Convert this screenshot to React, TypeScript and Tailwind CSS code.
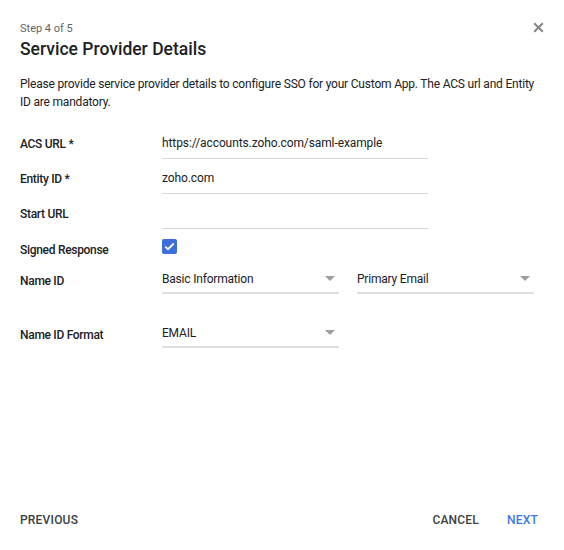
import React from 'react'

function Caret() {
  return (
    <svg width="10" height="5" viewBox="0 0 10 5" className="shrink-0">
      <path d="M0 0 L10 0 L5 5 Z" fill="#9e9e9e" />
    </svg>
  )
}

function TextField({ value }: { value: string }) {
  return (
    <div className="w-[266px] h-[31px] border-b border-[#d5d5d5] flex items-center text-[12px] font-normal tracking-[-0.1px] text-[#202124]">
      {value}
    </div>
  )
}

function Select({ value, width }: { value: string; width: string }) {
  return (
    <div className={`${width} h-[31px] border-b-2 border-[#dedede] flex items-center justify-between pt-[3px] pr-[4px] text-[12px] font-normal tracking-[-0.2px] text-[#202124]`}>
      <span>{value}</span>
      <Caret />
    </div>
  )
}

export default function App() {
  return (
    <div
      className="w-[564px] h-[550px] bg-white flex flex-col px-5 relative"
      style={{ fontFamily: 'Roboto, "Liberation Sans", sans-serif' }}
    >
      <button className="absolute right-[20px] top-[22px] w-[11px] h-[11px]">
        <svg width="11" height="11" viewBox="0 0 11 11">
          <path d="M1.2 1.2 L9.8 9.8 M9.8 1.2 L1.2 9.8" stroke="#858585" strokeWidth="2" />
        </svg>
      </button>

      <div className="pt-[22px] text-[11px] text-[#5f6368] leading-[14px]">Step 4 of 5</div>
      <h1 className="mt-[2px] text-[17.5px] font-medium text-[#202124] leading-[22px]">Service Provider Details</h1>

      <p className="mt-[15px] w-[520px] text-[12px] tracking-[-0.2px] leading-[18px] text-[#202124]">
        Please provide service provider details to configure SSO for your Custom App. The ACS url and Entity ID are
        mandatory.
      </p>

      <div className="mt-[15px] flex flex-col text-[12px] font-medium tracking-[-0.3px] text-[#202124]">
        <div className="flex items-center h-[35px]">
          <div className="w-[142px]">ACS URL *</div>
          <TextField value="https://accounts.zoho.com/saml-example" />
        </div>
        <div className="flex items-center h-[35px]">
          <div className="w-[142px]">Entity ID *</div>
          <TextField value="zoho.com" />
        </div>
        <div className="flex items-center h-[35px]">
          <div className="w-[142px]">Start URL</div>
          <TextField value="" />
        </div>
        <div className="flex items-center h-[36px] pt-[2px]">
          <div className="w-[142px]">Signed Response</div>
          <div className="w-[15px] h-[15px] rounded-[2px] bg-[#3b6fd9] flex items-center justify-center -mt-[7px]">
            <svg width="11" height="9" viewBox="0 0 11 9">
              <path d="M1.2 4.6 L4 7.2 L9.8 1.5" stroke="white" strokeWidth="1.8" fill="none" />
            </svg>
          </div>
        </div>
        <div className="flex items-center h-[34px] -mt-[6px]">
          <div className="w-[142px] pt-[5px]">Name ID</div>
          <div className="flex">
            <Select value="Basic Information" width="w-[177px]" />
            <div className="w-[18px]" />
            <Select value="Primary Email" width="w-[177px]" />
          </div>
        </div>
        <div className="flex items-center h-[34px] mt-[20px]">
          <div className="w-[142px] pt-[5px]">Name ID Format</div>
          <Select value="EMAIL" width="w-[177px]" />
        </div>
      </div>

      <div className="mt-auto mb-[21px] flex items-center text-[12px] font-medium tracking-[0.2px]">
        <button className="text-[#3c4043]">PREVIOUS</button>
        <div className="flex-1" />
        <button className="text-[#3c4043] mr-[28px]">CANCEL</button>
        <button className="text-[#3b78e7] mr-[6px]">NEXT</button>
      </div>
    </div>
  )
}
